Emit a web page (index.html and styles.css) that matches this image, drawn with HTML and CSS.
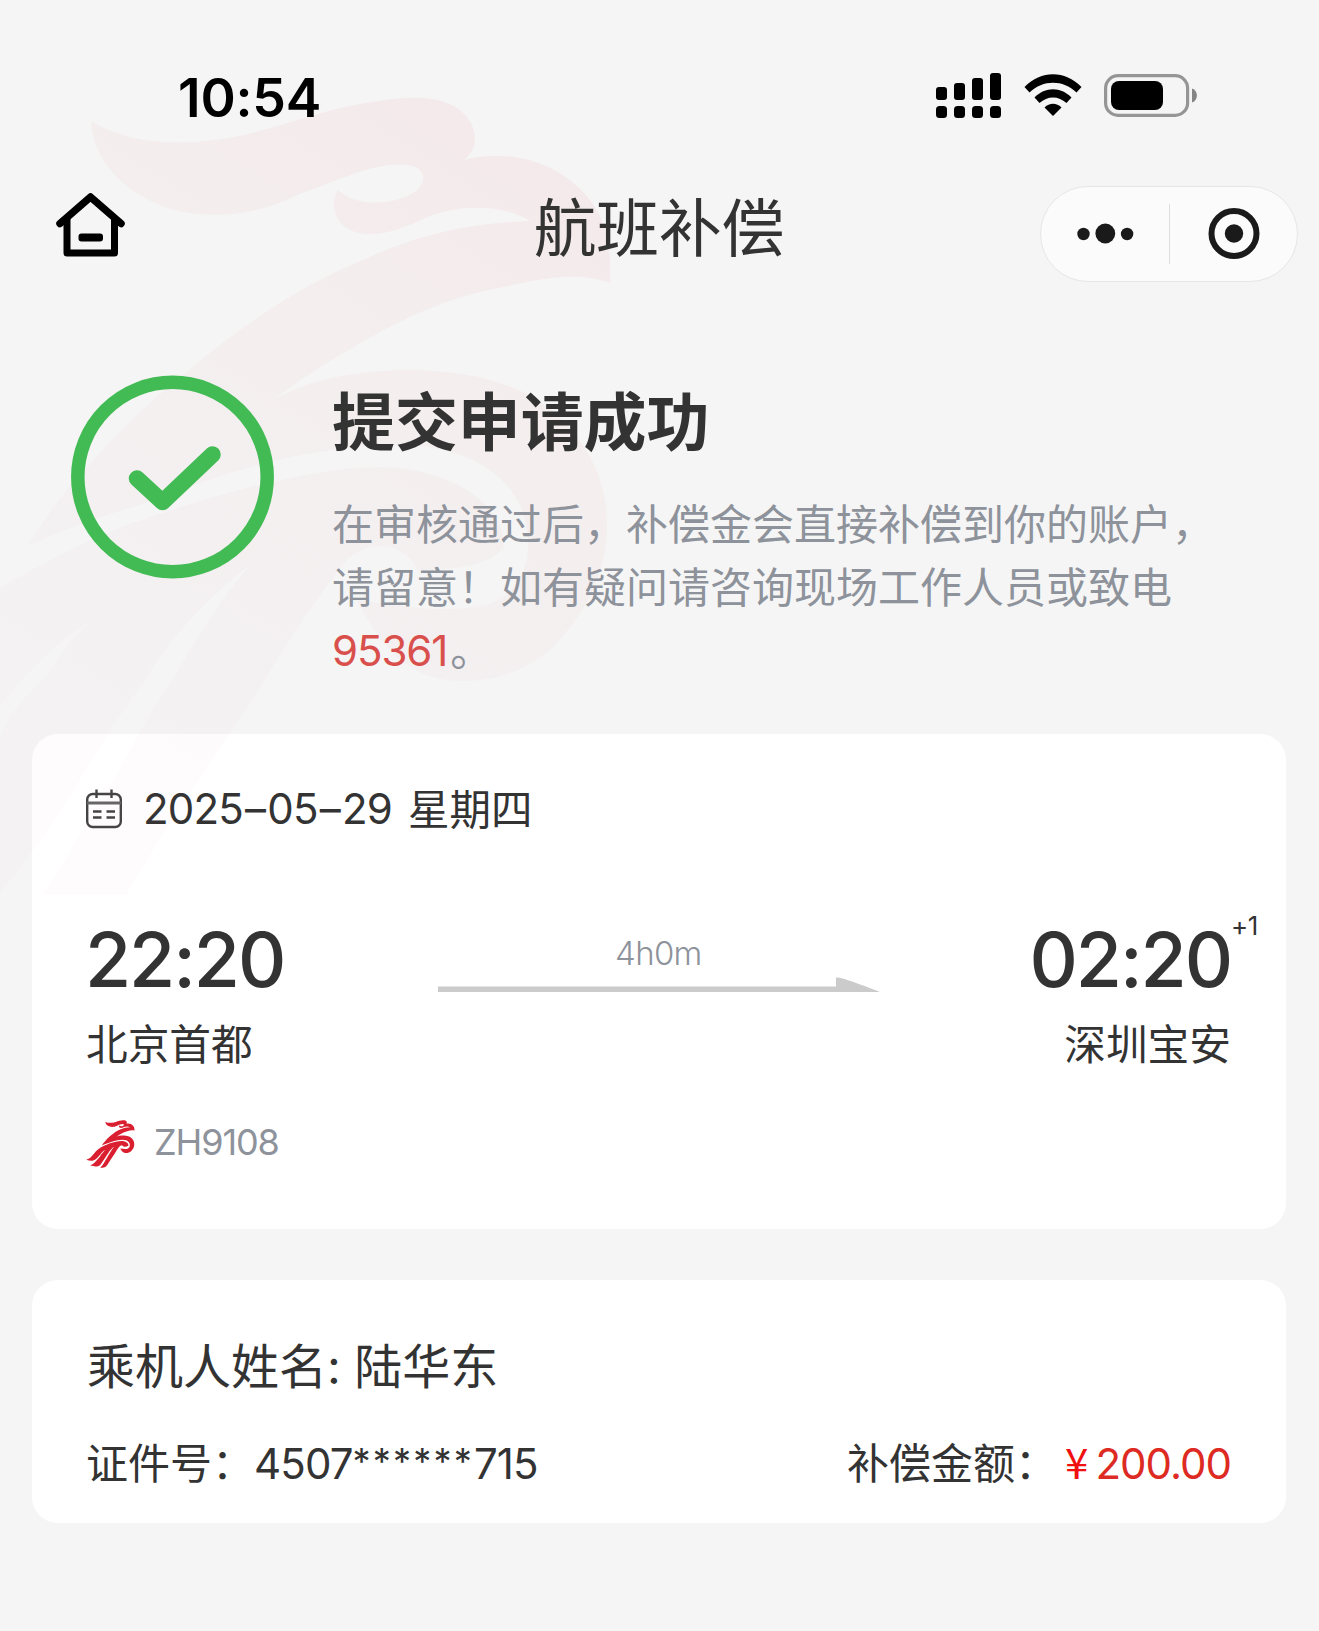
FILE: index.html
```html
<!DOCTYPE html>
<html lang="zh-CN">
<head>
  <meta charset="UTF-8" />
  <meta name="viewport" content="width=device-width, initial-scale=1.0" />
  <title>航班补偿</title>
  <link rel="stylesheet" href="styles.css">
</head>
<body>
  <!-- Shared phoenix logo -->
  <svg class="defs" aria-hidden="true">
    <symbol id="phoenix" viewBox="-250 92 866 856">
      <path d="M91 121C128 144 182 148 244 135C290 124 330 107 379 101C405 97 430 96 447 103C474 113 485 144 464 160C510 148 560 162 590 200C613 232 610 255 610 283C570 268 525 283 480 292C425 306 382 330 349 350C320 366 295 384 274 399C315 377 363 370 413 370C480 371 530 388 560 418C592 449 607 485 607 525C607 570 588 612 550 650C520 675 480 686 440 679C395 669 372 630 357 600C400 606 450 614 485 605C520 595 532 562 527 530C522 495 500 470 460 455C420 441 370 443 307 454C230 468 180 492 133 507C95 518 60 532 27 546C43 523 60 495 78 478C110 440 145 405 183 375C235 330 300 285 365 259C420 234 470 223 530 221C505 205 460 203 425 218C395 233 365 241 345 227C332 217 331 200 338 190C350 203 380 207 405 197C425 190 430 171 412 166C380 159 340 180 300 194C250 218 210 219 170 209C120 192 93 158 91 121Z"/>
      <path d="M-110 690C-70 640 -30 605 0 588C45 562 90 538 133 523C190 503 235 490 277 481C325 470 365 465 400 468C460 475 508 510 503 548C490 565 455 570 417 570C407 543 365 534 340 568C305 615 282 650 257 693C220 748 170 820 126 895C105 932 60 950 0 938C55 900 75 830 114 780C135 740 155 705 172 680C197 638 220 600 250 565C210 595 172 635 145 680C112 725 95 755 80 780C45 835 20 870 0 893C-50 930 -100 928 -180 900C-100 880 -50 790 0 740C10 705 30 697 53 668C62 650 75 635 90 622C50 646 20 680 0 706C-70 795 -120 850 -250 800C-190 790 -150 740 -110 690Z"/>
    </symbol>
  </svg>

  <svg class="watermark" viewBox="0 0 640 895" aria-hidden="true">
    <defs>
      <linearGradient id="fade" gradientUnits="userSpaceOnUse" x1="480" y1="120" x2="100" y2="720">
        <stop offset="0" stop-color="#e63c50" stop-opacity="0.062"/>
        <stop offset="0.35" stop-color="#e05050" stop-opacity="0.042"/>
        <stop offset="1" stop-color="#c83c6e" stop-opacity="0.016"/>
      </linearGradient>
    </defs>
    <use href="#phoenix" x="-250" y="92" width="866" height="856" fill="url(#fade)"/>
  </svg>

  <div class="page">
    <div class="status-bar">
      <span class="clock">10:54</span>
      <div class="status-icons">
        <svg width="65" height="46" viewBox="0 0 65 46">
          <rect x="0" y="14" width="11" height="13" rx="3"/>
          <rect x="18" y="10" width="11" height="17" rx="3"/>
          <rect x="36" y="5" width="11" height="22" rx="3"/>
          <rect x="54" y="0" width="11" height="27" rx="3"/>
          <rect x="0" y="33" width="11" height="12" rx="3.5"/>
          <rect x="18" y="33" width="11" height="12" rx="3.5"/>
          <rect x="36" y="33" width="11" height="12" rx="3.5"/>
          <rect x="54" y="33" width="11" height="12" rx="3.5"/>
        </svg>
        <svg width="58" height="43" viewBox="0 0 58 43">
          <path d="M0.500 13C17 -4 41 -4 57.500 13L52.500 18.500C39 5.500 19 5.500 5.500 18.500Z"/>
          <path d="M10.500 23.500C21 12.500 37 12.500 47.500 23.500L42.500 29C34.500 21.500 23.500 21.500 15.500 29Z"/>
          <path d="M20.500 33.500C25.500 28.500 32.500 28.500 37.500 33.500L29 42Z"/>
        </svg>
        <svg width="93" height="43" viewBox="0 0 93 43">
          <rect x="1.600" y="1.600" width="82" height="39.800" rx="12.500" fill="none" stroke="#959595" stroke-width="3.200"/>
          <rect x="7" y="7" width="52" height="29" rx="8"/>
          <path d="M88 14.500C94.500 16.500 94.500 26.500 88 28.500Z" fill="#858585"/>
        </svg>
      </div>
    </div>

    <div class="nav">
      <svg class="home" width="70" height="64" viewBox="0 0 70 64">
        <path d="M4 30.500L34.500 4L65 30.500" fill="none" stroke="#000" stroke-width="7.500" stroke-linecap="round" stroke-linejoin="round"/>
        <path d="M11 25V60H58.500V25" fill="none" stroke="#000" stroke-width="7" stroke-linejoin="round"/>
        <rect x="22.500" y="40.500" width="24.500" height="8" rx="3"/>
      </svg>
      <h1>航班补偿</h1>
      <div class="capsule">
        <svg width="128" height="94" viewBox="0 0 128 94">
          <circle cx="42.500" cy="47" r="6.200"/>
          <circle cx="64.300" cy="46.500" r="9.900"/>
          <circle cx="86.100" cy="47" r="6.200"/>
        </svg>
        <span class="divider"></span>
        <svg width="127" height="94" viewBox="0 0 127 94">
          <circle cx="64" cy="46.500" r="22.500" fill="none" stroke="#1a1a1a" stroke-width="6"/>
          <circle cx="64" cy="46.500" r="9.200"/>
        </svg>
      </div>
    </div>

    <div class="result">
      <svg width="204" height="206" viewBox="0 0 204 206">
        <circle cx="101.500" cy="103" r="94.700" fill="none" stroke="#43bb55" stroke-width="13.500"/>
        <path d="M66 104.500L91.500 128L141.500 80.500" fill="none" stroke="#43bb55" stroke-width="16.500" stroke-linecap="round" stroke-linejoin="round"/>
      </svg>
      <div class="result-text">
        <h2>提交申请成功</h2>
        <p>在审核通过后，补偿金会直接补偿到你的账户，<br>请留意！如有疑问请咨询现场工作人员或致电<br><a>95361</a>。</p>
      </div>
    </div>

    <div class="card flight">
      <div class="date">
        <svg width="36" height="40" viewBox="0 0 36 40" fill="none" stroke="#444" stroke-width="2.400">
          <rect x="1.200" y="5" width="33.600" height="33" rx="5.500"/>
          <path d="M1 14H35" stroke="#666" stroke-width="3"/>
          <path d="M10.500 0.500V9M25.500 0.500V9"/>
          <path d="M7 22.500H15.500M20.500 22.500H29M7 28.500H15.500M20.500 28.500H29" stroke-width="2.400"/>
        </svg>
        <span class="day">2025<b>–</b>05<b>–</b>29</span>
        <span class="week">星期四</span>
      </div>
      <div class="route">
        <div class="stop">
          <div class="time">22:20</div>
          <div class="city">北京首都</div>
        </div>
        <div class="leg">
          <span>4h0m</span>
          <svg width="441" height="16" viewBox="0 0 441 16" fill="#cbcbcb">
            <path d="M0 9.500H398V0.500C404 0.500 412 3.500 441 14.500V15H0Z"/>
          </svg>
        </div>
        <div class="stop arrive">
          <div class="time">02:20<sup>+1</sup></div>
          <div class="city">深圳宝安</div>
        </div>
      </div>
      <div class="flight-no">
        <svg width="49" height="48" fill="#d91f30"><use href="#phoenix"/></svg>
        <span>ZH9108</span>
      </div>
    </div>

    <div class="card passenger">
      <div class="name">乘机人姓名: 陆华东</div>
      <div class="detail">
        <div>证件号：<span class="id-no">4507<span class="stars">******</span>715</span></div>
        <div>补偿金额：<span class="amount"><i>¥</i>200.00</span></div>
      </div>
    </div>
  </div>
</body>
</html>
```
FILE: styles.css
```css
* {
  box-sizing: border-box;
}

body {
  margin: 0;
  background-color: #f5f5f5;
  color: #333;
  font-family: Inter, "Noto Sans CJK SC", sans-serif;
  font-size: 42px;
}

svg {
  display: block;
  flex-shrink: 0;
}

.defs {
  position: absolute;
  width: 0;
  height: 0;
}

/* tints the first card too, but stays under the header texts */
.watermark {
  position: absolute;
  left: 0;
  top: 0;
  width: 640px;
  height: 895px;
  z-index: 1;
  pointer-events: none;
}

.page {
  width: 1319px;
  height: 1631px;
  overflow: hidden;
}

.status-bar,
.nav,
.result {
  position: relative;
  z-index: 2;
}

/* status bar */
.status-bar {
  display: flex;
  justify-content: space-between;
  align-items: center;
  height: 126px;
  padding: 65px 122px 0 178px;
}

.clock {
  color: #000;
  font-size: 53.5px;
  font-weight: 600;
  line-height: 60px;
  margin-top: 4px;
  letter-spacing: -0.2px;
}

.status-icons {
  display: flex;
  align-items: center;
  gap: 22.5px;
}

/* navigation */
.nav {
  display: grid;
  grid-template-columns: 1fr auto 1fr;
  height: 96px;
  margin-top: 60px;
  padding: 0 21px;
}

.home {
  margin: 7px 0 0 35px;
}

h1 {
  margin: 0 1px 0 0;
  font-size: 62.7px;
  font-weight: 400;
  line-height: 84px;
}

.capsule {
  display: flex;
  align-items: center;
  justify-self: end;
  width: 258px;
  height: 96px;
  border: 1px solid #e6e6e6;
  border-radius: 48px;
  background-color: #fbfbfb;
  fill: #1a1a1a;
}

.divider {
  width: 1px;
  height: 60px;
  background-color: #dedede;
}

/* submit result */
.result {
  display: flex;
  gap: 57px;
  height: 308px;
  margin-top: 92px;
  padding-left: 71px;
}

.result-text {
  padding-top: 16px;
}

h2 {
  margin: 0 0 39px;
  font-size: 62.9px;
  font-weight: 700;
  line-height: 64px;
}

.result p {
  margin: 0;
  color: #8d929b;
  line-height: 63px;
  white-space: nowrap;
}

.result a {
  margin-right: 3px;
  color: #d94f4c;
  letter-spacing: -1.1px;
}

/* cards */
.card {
  margin: 52px 33px 0 32px;
  padding: 0 55px 0 54px;
  border-radius: 26px;
  background-color: #fff;
}

.flight {
  height: 495px;
  padding-top: 54px;
}

.date {
  display: flex;
  align-items: center;
  height: 42px;
  line-height: 42px;
}

.day {
  margin: 0 16px 0 21px;
  letter-spacing: -0.8px;
}

.day b {
  margin: 0 2px;
  font-weight: 400;
}

.week {
  margin-top: 2px;
  font-size: 41.5px;
}

.route {
  display: flex;
  justify-content: space-between;
  margin-top: 92px;
}

.time {
  position: relative;
  font-size: 75px;
  font-weight: 500;
  line-height: 76px;
  letter-spacing: -2.1px;
}

.stop:first-child .time {
  margin-left: -1px;
}

.time sup {
  position: absolute;
  left: 100%;
  top: -12px;
  font-size: 26px;
  font-weight: 400;
  line-height: 32px;
  letter-spacing: -0.5px;
}

.city {
  margin-top: 22px;
  font-size: 41.7px;
  line-height: 50px;
}

.arrive {
  text-align: right;
}

.leg {
  display: flex;
  flex-direction: column;
  align-items: center;
  color: #8d929b;
  font-size: 33px;
  font-weight: 350;
  line-height: 40px;
  letter-spacing: -0.7px;
  padding: 11px 0 0 3px;
}

.leg svg {
  margin-top: 4px;
}

.flight-no {
  display: flex;
  align-items: center;
  gap: 19px;
  margin-top: 50px;
  color: #8d929b;
  font-size: 36px;
  font-weight: 400;
  line-height: 48px;
  letter-spacing: -1.1px;
}

.flight-no span {
  margin-top: -5px;
}

.passenger {
  height: 243px;
  margin-top: 51px;
  padding-top: 57px;
}

.name {
  padding-left: 1px;
  font-size: 48px;
  line-height: 60px;
}

.detail {
  display: flex;
  justify-content: space-between;
  margin-top: 37px;
  line-height: 60px;
}

.id-no {
  letter-spacing: -0.9px;
}

.stars {
  position: relative;
  top: -5px;
  font-size: 36px;
  line-height: 1;
  letter-spacing: 2.2px;
}

.amount {
  margin-left: 8px;
  color: #dd2a22;
  letter-spacing: -1px;
}

.amount i {
  margin-right: 8px;
  color: #f01010;
  font-family: "Noto Sans CJK SC", sans-serif;
  font-style: normal;
  line-height: 1;
}
```
